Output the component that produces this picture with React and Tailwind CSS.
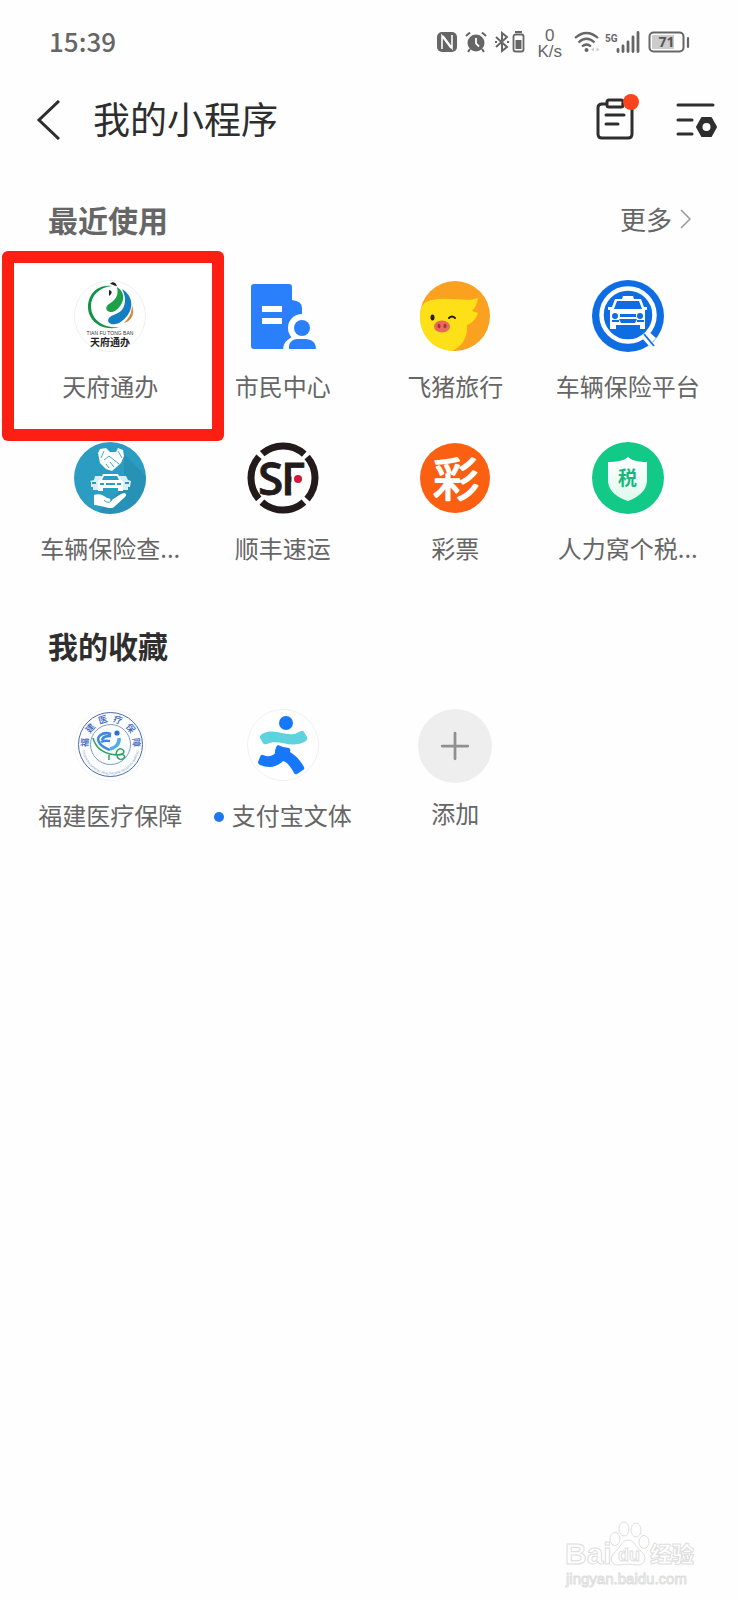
import { Plus } from 'lucide-react';

const CJK = "'Noto Sans CJK SC', sans-serif";

function TianfuIcon() {
  return (
    <svg viewBox="0 0 72 72" className="size-full">
      <circle cx="36" cy="36" r="35.5" fill="#fff" stroke="#f0f0f0" />
      <path d="M38 6 C22 4 14 16 14 27 C14 41 28 52 46 47 C33 49 17 42 17 26 C17 16 25 7 38 6 Z" fill="#129345" />
      <path d="M43 7 C53 13 50 25 41 31 C36 34 30 30 33 26 C36 22 46 20 43 7 Z" fill="#1ca049" />
      <path d="M48 9 C61 17 60 32 48 41 C41 47 31 44 35 38 C39 33 50 35 51 21 C51 16 50 13 48 9 Z" fill="#147fc0" />
      <path d="M58 25 C61 33 58 41 50 43 C55 38 58 33 58 25 Z" fill="#d98435" />
      <path d="M36 4 C38 1 42 2 43 6 C40 6 38 4 36 4 Z M35 10 C39 11 38 14 35 16 Z" fill="#222" />
      <text x="36" y="55" textAnchor="middle" fontSize="5" fontFamily="'Liberation Sans', sans-serif" fill="#333">TIAN FU TONG BAN</text>
      <text x="36" y="66" textAnchor="middle" fontSize="10" fontWeight="700" fontFamily={CJK} fill="#222">天府通办</text>
    </svg>
  );
}

function CitizenIcon() {
  return (
    <svg viewBox="0 0 72 72" className="size-full">
      <path d="M7 4 H42 Q45 4 45 7 V20 Q55 21 55 28 V69 H7 Q4 69 4 66 V7 Q4 4 7 4 Z" fill="#2a80fb" />
      <path d="M15 26h20v6H15z M15 38h20v6H15z" fill="#fff" />
      <circle cx="55" cy="48" r="14" fill="#fff" />
      <path d="M36 70 C36 61 43 58 49 55 H72 V70 Z" fill="#fff" />
      <circle cx="55" cy="48" r="8" fill="#2a80fb" />
      <path d="M42 69 C41 57 53 59 55 59 C58 59 69 58 69 69 Z" fill="#2a80fb" />
    </svg>
  );
}

function FliggyIcon() {
  return (
    <svg viewBox="0 0 72 72" className="size-full">
      <circle cx="36" cy="36" r="35" fill="#faa11f" />
      <path d="M2 28 C5 21 11 20 20 19 C36 18 48 22 59 18 C58 24 56 28 53 31 L59 33 C57 39 53 43 48 45 C49 57 43 67 33 71 C12 70 -3 52 2 28 Z" fill="#fee018" />
      <ellipse cx="13.500" cy="37.500" rx="2" ry="3" fill="#2b1a0c" />
      <path d="M30 38 Q33 35 36 38" fill="none" stroke="#2b1a0c" strokeWidth="2" strokeLinecap="round" />
      <ellipse cx="23" cy="46.500" rx="8" ry="6" fill="#e9695a" />
      <ellipse cx="20" cy="46" rx="1.500" ry="2.200" fill="#a83338" />
      <ellipse cx="26" cy="46" rx="1.500" ry="2.200" fill="#a83338" />
    </svg>
  );
}

function CarSearchIcon() {
  return (
    <svg viewBox="0 0 72 72" className="size-full">
      <circle cx="36" cy="36" r="36" fill="#0e6de2" />
      <circle cx="36" cy="35" r="26.500" fill="none" stroke="#fff" strokeWidth="4.500" />
      <path d="M50 58 L56 51 L64 58 L57 66 Z" fill="#fff" />
      <path d="M52 54 L62 66" stroke="#0e6de2" strokeWidth="1.800" />
      <path d="M31 16h10l1 3 H30z" fill="#fff" />
      <path d="M23 19 H49 L52 27 H55 V30 H53 V49 H48 V45 H24 V49 H18 V30 H16 V27 H20 Z" fill="#fff" />
      <path d="M25 21 H47 L50 29 H22 Z" fill="#0e6de2" />
      <circle cx="23" cy="36" r="3" fill="#0e6de2" />
      <circle cx="48" cy="36" r="3" fill="#0e6de2" />
      <path d="M28 34h16v3H28z M20 40h7v2h-7z M45 40h7v2h-7z M27 39h18l-2 4H29z" fill="#0e6de2" />
    </svg>
  );
}

function CarCheckIcon() {
  return (
    <svg viewBox="0 0 72 72" className="size-full">
      <circle cx="36" cy="36" r="36" fill="#2b9dc3" />
      <path d="M50 12 L72 34 A36 36 0 0 1 24 70 L50 45 Z" fill="#237fa3" opacity="0.4" />
      <path d="M26 7 L32 6 L36 10 L42 10 L44 6 L49 8 L50 14 L47 21 L38 29 L32 27 L26 21 L24 11 Z" fill="#fff" />
      <path d="M30 9 L27 16 M44 9 L48 16 M30 18 L35 14 L45 22 M32 22 L35 26 M36 20 L40 25" fill="none" stroke="#2b9dc3" strokeWidth="0.900" />
      <path d="M21 34h9l-3 6-2 8h-6v-3h-2v-5l-1-1 4-1z M43 34h9l2 4 3 1-1 6h-2v3h-6z" fill="#d9eef5" />
      <path d="M29 32h15l3 6 2 1v10h-5v-3H29v3h-5V39l2-1z" fill="#fff" />
      <path d="M30 34h13l2 4H28z M26 41h4v2h-4z M43 41h4v2h-4z M32 41h9v2h-9z M18 40h4v2h-4z M51 40h4v2h-4z" fill="#2b9dc3" />
      <path d="M20 53 C25 51 29 53 33 56 C36 56 37 57 36 59 L47 52 C51 50 54 52 51 55 L40 65 C37 68 30 64 20 63 Z" fill="#fff" />
      <path d="M30 58 C33 61 36 61 38 58" fill="none" stroke="#2b9dc3" strokeWidth="1" />
    </svg>
  );
}

function SfIcon() {
  return (
    <svg viewBox="0 0 72 72" className="size-full">
      <circle cx="36" cy="36" r="32" fill="none" stroke="#231a1c" strokeWidth="7" strokeDasharray="45.800 4.465" transform="rotate(-41 36 36)" />
      <g fill="#231a1c" fontFamily="'Open Sans', sans-serif" fontWeight="600" fontSize="46" stroke="#231a1c" strokeWidth="0.800">
        <text x="11" y="53">S</text>
        <text x="34" y="53">F</text>
      </g>
      <path d="M44.500 26h16v24h-16z" fill="#fff" />
      <circle cx="51" cy="37" r="4" fill="#d6173c" />
    </svg>
  );
}

function LotteryIcon() {
  return (
    <svg viewBox="0 0 72 72" className="size-full">
      <circle cx="36" cy="36" r="35" fill="#fb5f12" />
      <text x="37" y="54" textAnchor="middle" fontSize="46" fontWeight="400" fontFamily={CJK} fill="#fff" stroke="#fff" strokeWidth="1.600" strokeLinejoin="round">彩</text>
    </svg>
  );
}

function TaxIcon() {
  return (
    <svg viewBox="0 0 72 72" className="size-full">
      <defs>
        <linearGradient id="shield" x1="0" y1="0" x2="0" y2="1">
          <stop offset="0" stopColor="#fff" />
          <stop offset="1" stopColor="#e0f9ee" />
        </linearGradient>
      </defs>
      <circle cx="36" cy="36" r="36" fill="#12c987" />
      <path d="M36 15 C40 19 48 20 55 20 V38 C55 50 44 56 36 59 C27 56 16 50 16 38 V20 C24 20 32 19 36 15 Z" fill="url(#shield)" />
      <text x="35.500" y="43" textAnchor="middle" fontSize="19" fontWeight="700" fontFamily={CJK} fill="#17b87f">税</text>
    </svg>
  );
}

function MedicalIcon() {
  return (
    <svg viewBox="0 0 72 72" className="size-full">
      <circle cx="36" cy="36" r="35.500" fill="#fff" stroke="#f3f5f8" />
      <circle cx="36.500" cy="35.500" r="32" fill="#fbfdff" stroke="#4c6bab" />
      <circle cx="36.500" cy="35.500" r="20" fill="none" stroke="#5d87a8" strokeWidth="0.800" />
      <path id="sealTop" d="M14.500 40 A22.500 22.500 0 1 1 58.500 40" fill="none" />
      <path id="sealBottom" d="M8 37 A28.500 28.500 0 0 0 65 37" fill="none" />
      <text fontSize="9" fontWeight="500" fontFamily={CJK} fill="#3a62b8">
        {['福', '建', '医', '疗', '保', '障'].map((c, i) => (
          <textPath key={c} href="#sealTop" startOffset={`${8 + i * 16.8}%`} textAnchor="middle">{c}</textPath>
        ))}
      </text>
      <text fontSize="3" fontFamily="'Liberation Sans', sans-serif" fill="#7c93b8">
        <textPath href="#sealBottom" startOffset="50%" textAnchor="middle">FUJIAN PROVINCIAL HEALTHCARE SECURITY BUREAU</textPath>
      </text>
      <path d="M37 25 C28 22 22 28 25 33 C27 38 32 39 36 41 M28 31 C29 27 33 27 37 27 M27 33 C31 31 33 32 36 32" fill="none" stroke="#3f8ae0" strokeWidth="2.500" />
      <circle cx="43" cy="24" r="2.600" fill="#2f6fd0" />
      <path d="M45 29 C46 35 41 39 36 40" fill="none" stroke="#53aee8" strokeWidth="3.500" />
      <path d="M19 29 C22 40 31 46 46 46 M35 46 V51 M42 46 C42 41 46 38 49 41 C52 44 47 46 44 46 C49 44 52 47 50 49 C47 52 43 50 43 46" fill="none" stroke="#2fa263" strokeWidth="1.500" />
    </svg>
  );
}

function SportIcon() {
  return (
    <svg viewBox="0 0 72 72" className="size-full">
      <circle cx="36" cy="36" r="35.500" fill="#fff" stroke="#f0f0f0" />
      <circle cx="39" cy="14" r="7" fill="#1677fa" />
      <path d="M15 25 C29 18 39 29 50 24 L54 22 Q56 21 57 23 L60 28 Q61 30 59 32 C44 41 32 29 20 35 Q17 36 16 34 L13 29 Q12 27 15 25 Z" fill="#5fd3dd" />
      <path d="M31 36 Q37 39 42 39 Q44 40 43 43 C50 47 54 53 57 58 Q58 60 56 61 L50 65 Q48 66 47 64 C44 58 40 53 36 52 C29 59 21 59 13 56 Q11 55 11 53 L13 48 Q14 45 16 46 C23 49 29 46 28 42 Q29 37 31 36 Z" fill="#1677fa" />
    </svg>
  );
}

const RECENT = [
  { name: '天府通办', Icon: TianfuIcon, marked: true },
  { name: '市民中心', Icon: CitizenIcon },
  { name: '飞猪旅行', Icon: FliggyIcon },
  { name: '车辆保险平台', Icon: CarSearchIcon },
  { name: '车辆保险查...', Icon: CarCheckIcon },
  { name: '顺丰速运', Icon: SfIcon },
  { name: '彩票', Icon: LotteryIcon },
  { name: '人力窝个税...', Icon: TaxIcon },
];

const FAVORITES = [
  { name: '福建医疗保障', Icon: MedicalIcon },
  { name: '支付宝文体', Icon: SportIcon, dot: true },
];

function AppTile({ name, Icon, marked, dot }) {
  return (
    <button type="button" className="relative flex flex-col items-center gap-4">
      {/* highlight frame sits behind the icon and label */}
      {marked && (
        <span className="absolute -top-[29px] -right-[27px] -left-[22px] -z-10 h-[190px] rounded-md bg-[#fd2012] p-3">
          <span className="block size-full bg-white" />
        </span>
      )}
      <span className="size-18"><Icon /></span>
      <span className="flex items-center gap-2 whitespace-nowrap text-2xl leading-9 text-[#666]">
        {dot && <span className="mt-1 size-[10px] rounded-full bg-[#1e77f0]" />}
        {name}
      </span>
    </button>
  );
}

function StatusBar() {
  return (
    <div className="flex h-[84px] items-center justify-between pr-12 pl-[49px] text-[#666]">
      <time className="pb-[2px] text-[26px] font-medium leading-none">15:39</time>
      <div className="flex items-center">
        <svg viewBox="0 0 20 20" className="mr-2 size-5">
          <rect width="20" height="20" rx="5" fill="#666" />
          <path d="M5 17 V4 L14 16 M6 4 L15 16 V3" fill="none" stroke="#fff" strokeWidth="1.600" />
        </svg>
        <svg viewBox="0 0 22 22" className="mr-2 size-[22px]">
          <circle cx="11" cy="12" r="8.500" fill="#666" />
          <path d="M1 5 L5 1.500 M21 5 L17 1.500 M5 18 L3 21 M17 18 L19 21" stroke="#666" strokeWidth="2" />
          <path d="M11 7 V12.500 L14 15.500" fill="none" stroke="#fff" strokeWidth="1.800" />
        </svg>
        <svg viewBox="0 0 30 22" className="h-[22px] w-[30px]" fill="none" stroke="#666">
          <path d="M1 6 L12 16 L7 20 V2 L12 6 L1 16" strokeWidth="2" />
          <path d="M12 11h2 M0 11h2" strokeWidth="1.800" />
          <rect x="18.500" y="3.500" width="10" height="17" rx="2" strokeWidth="1.800" />
          <path d="M20 1h7" strokeWidth="2" />
          <path d="M20.500 9h6v9h-6z" fill="#666" stroke="none" />
        </svg>
        <div className="mx-3 flex flex-col items-center pt-1 font-['Liberation_Sans',sans-serif] text-[17px] leading-4">
          <span>0</span>
          <span>K/s</span>
        </div>
        <svg viewBox="0 0 26 22" className="mr-1 h-[22px] w-[26px]" fill="none" stroke="#666" strokeWidth="2.200">
          <path d="M1 7 Q12.500 -3 24 7 M4.500 11.500 Q12.500 4 20.500 11.500 M8 15.500 Q12.500 11.500 17 15.500" />
          <circle cx="12.500" cy="19" r="2" fill="#666" stroke="none" />
          <path d="M17 18.500 L20 16.500 V20.500 Z M25.500 18.500 L22.500 16.500 V20.500 Z" fill="#ccc" stroke="none" />
        </svg>
        <svg viewBox="0 0 36 22" className="mr-2 h-[22px] w-9">
          <text x="1" y="11" fontSize="10" fontWeight="700" fontFamily="'Roboto', sans-serif" fill="#666">5G</text>
          <path d="M14 20.500 V18.500 M19 20.500 V15 M24 20.500 V11 M29 20.500 V6 M34 20.500 V1.500" stroke="#666" strokeWidth="2.800" strokeLinecap="round" />
        </svg>
        <svg viewBox="0 0 42 22" className="h-[22px] w-[42px]">
          <rect x="1.500" y="1.500" width="34" height="19" rx="4" fill="none" stroke="#666" strokeWidth="2" />
          <path d="M4 4h22v14H4z" fill="#ccc" />
          <text x="18.500" y="16" textAnchor="middle" fontSize="14" fontWeight="700" fontFamily="'Open Sans', sans-serif" fill="#555">71</text>
          <path d="M40 7v9" stroke="#666" strokeWidth="2.200" strokeLinecap="round" />
        </svg>
      </div>
    </div>
  );
}

function Watermark() {
  return (
    <svg viewBox="0 0 136 76" className="h-[76px] w-[136px]" fill="#fff" stroke="#dedede" strokeWidth="1">
      <text x="1" y="44" fontSize="30" fontWeight="700" fontFamily="'Liberation Sans', sans-serif">Bai</text>
      <ellipse cx="51" cy="19" rx="5" ry="6.500" />
      <ellipse cx="60" cy="9" rx="5" ry="7" />
      <ellipse cx="72" cy="10" rx="5" ry="7" />
      <ellipse cx="80" cy="22" rx="5" ry="6.500" />
      <path d="M64 20 C71 20 72 28 78 32 C84 38 80 46 72 45 C67 44 61 44 56 45 C47 46 45 38 50 33 C57 28 57 20 64 20 Z" />
      <text x="54" y="41" fontSize="18" fontWeight="700" fontFamily="'Liberation Sans', sans-serif">du</text>
      <text x="86" y="42" fontSize="22" fontWeight="900" fontFamily={CJK}>经验</text>
      <text x="2" y="64" fontSize="15" fontFamily="'Liberation Sans', sans-serif">jingyan.baidu.com</text>
    </svg>
  );
}

export default function App() {
  return (
    <div className="flex min-h-screen flex-col bg-[#fefefe] font-['Noto_Sans_CJK_SC',sans-serif]">
      <StatusBar />

      <header className="flex h-[72px] items-center pr-5 pl-9 text-[#2e2e2e]">
        <button type="button" aria-label="返回" className="mr-8">
          <svg viewBox="0 0 25 40" className="h-10 w-[25px]" fill="none" stroke="currentColor" strokeWidth="3">
            <path d="M23 1 L3 20 L23 39" />
          </svg>
        </button>
        <h1 className="flex-1 pb-1 text-[37px] leading-none">我的小程序</h1>
        <button type="button" aria-label="订单" className="mr-9">
          <svg viewBox="0 0 44 48" className="h-12 w-11 overflow-visible" fill="none" stroke="currentColor" strokeWidth="3" strokeLinecap="round">
            <path d="M10 8 H6 Q2 8 2 12 V38 Q2 42 6 42 H32 Q36 42 36 38 V12 Q36 8 32 8 H27" />
            <rect x="11" y="4" width="16" height="7" rx="2" />
            <path d="M10 19 H28 M10 28 H22" />
            <circle cx="35" cy="6" r="8" fill="#fb431d" stroke="none" />
          </svg>
        </button>
        <button type="button" aria-label="设置">
          <svg viewBox="0 0 42 36" className="h-9 w-[42px]" fill="none" stroke="currentColor" strokeWidth="3" strokeLinecap="round">
            <path d="M2 3 H37 M2 18 H16 M2 32 H16" />
            <path d="M26 16 H35 L40 25 L35 34 H26 L21 25 Z" fill="currentColor" strokeWidth="2" strokeLinejoin="round" />
            <circle cx="30.500" cy="25" r="4" fill="#fff" stroke="none" />
          </svg>
        </button>
      </header>

      <main className="px-6">
        <section className="pt-[41px]">
          <div className="flex h-11 items-center justify-between pr-[22px] pl-6 text-[#666]">
            <h2 className="text-[30px] font-bold leading-none">最近使用</h2>
            <a href="#more" className="flex items-center gap-2 text-[26px] leading-none">
              更多
              <svg viewBox="0 0 12 20" className="h-5 w-3" fill="none" stroke="#999" strokeWidth="1.500">
                <path d="M1 1 L10 10 L1 19" />
              </svg>
            </a>
          </div>
          <div className="isolate mt-[39px] grid grid-cols-4 gap-y-[38px]">
            {RECENT.map((app) => <AppTile key={app.name} {...app} />)}
          </div>
        </section>

        <section className="pt-[57px]">
          <h2 className="flex h-11 items-center pl-6 text-[30px] font-bold leading-none text-[#2e2e2e]">我的收藏</h2>
          <div className="mt-[42px] grid grid-cols-4">
            {FAVORITES.map((app) => <AppTile key={app.name} {...app} />)}
            <button type="button" className="flex flex-col items-center gap-3">
              <span className="flex size-[74px] items-center justify-center rounded-full bg-[#eeeeee]">
                <Plus size={44} strokeWidth={1.5} color="#909090" />
              </span>
              <span className="text-2xl leading-9 text-[#666]">添加</span>
            </button>
          </div>
        </section>
      </main>

      <footer className="mt-auto flex justify-end pr-[38px] pb-1">
        <Watermark />
      </footer>
    </div>
  );
}
